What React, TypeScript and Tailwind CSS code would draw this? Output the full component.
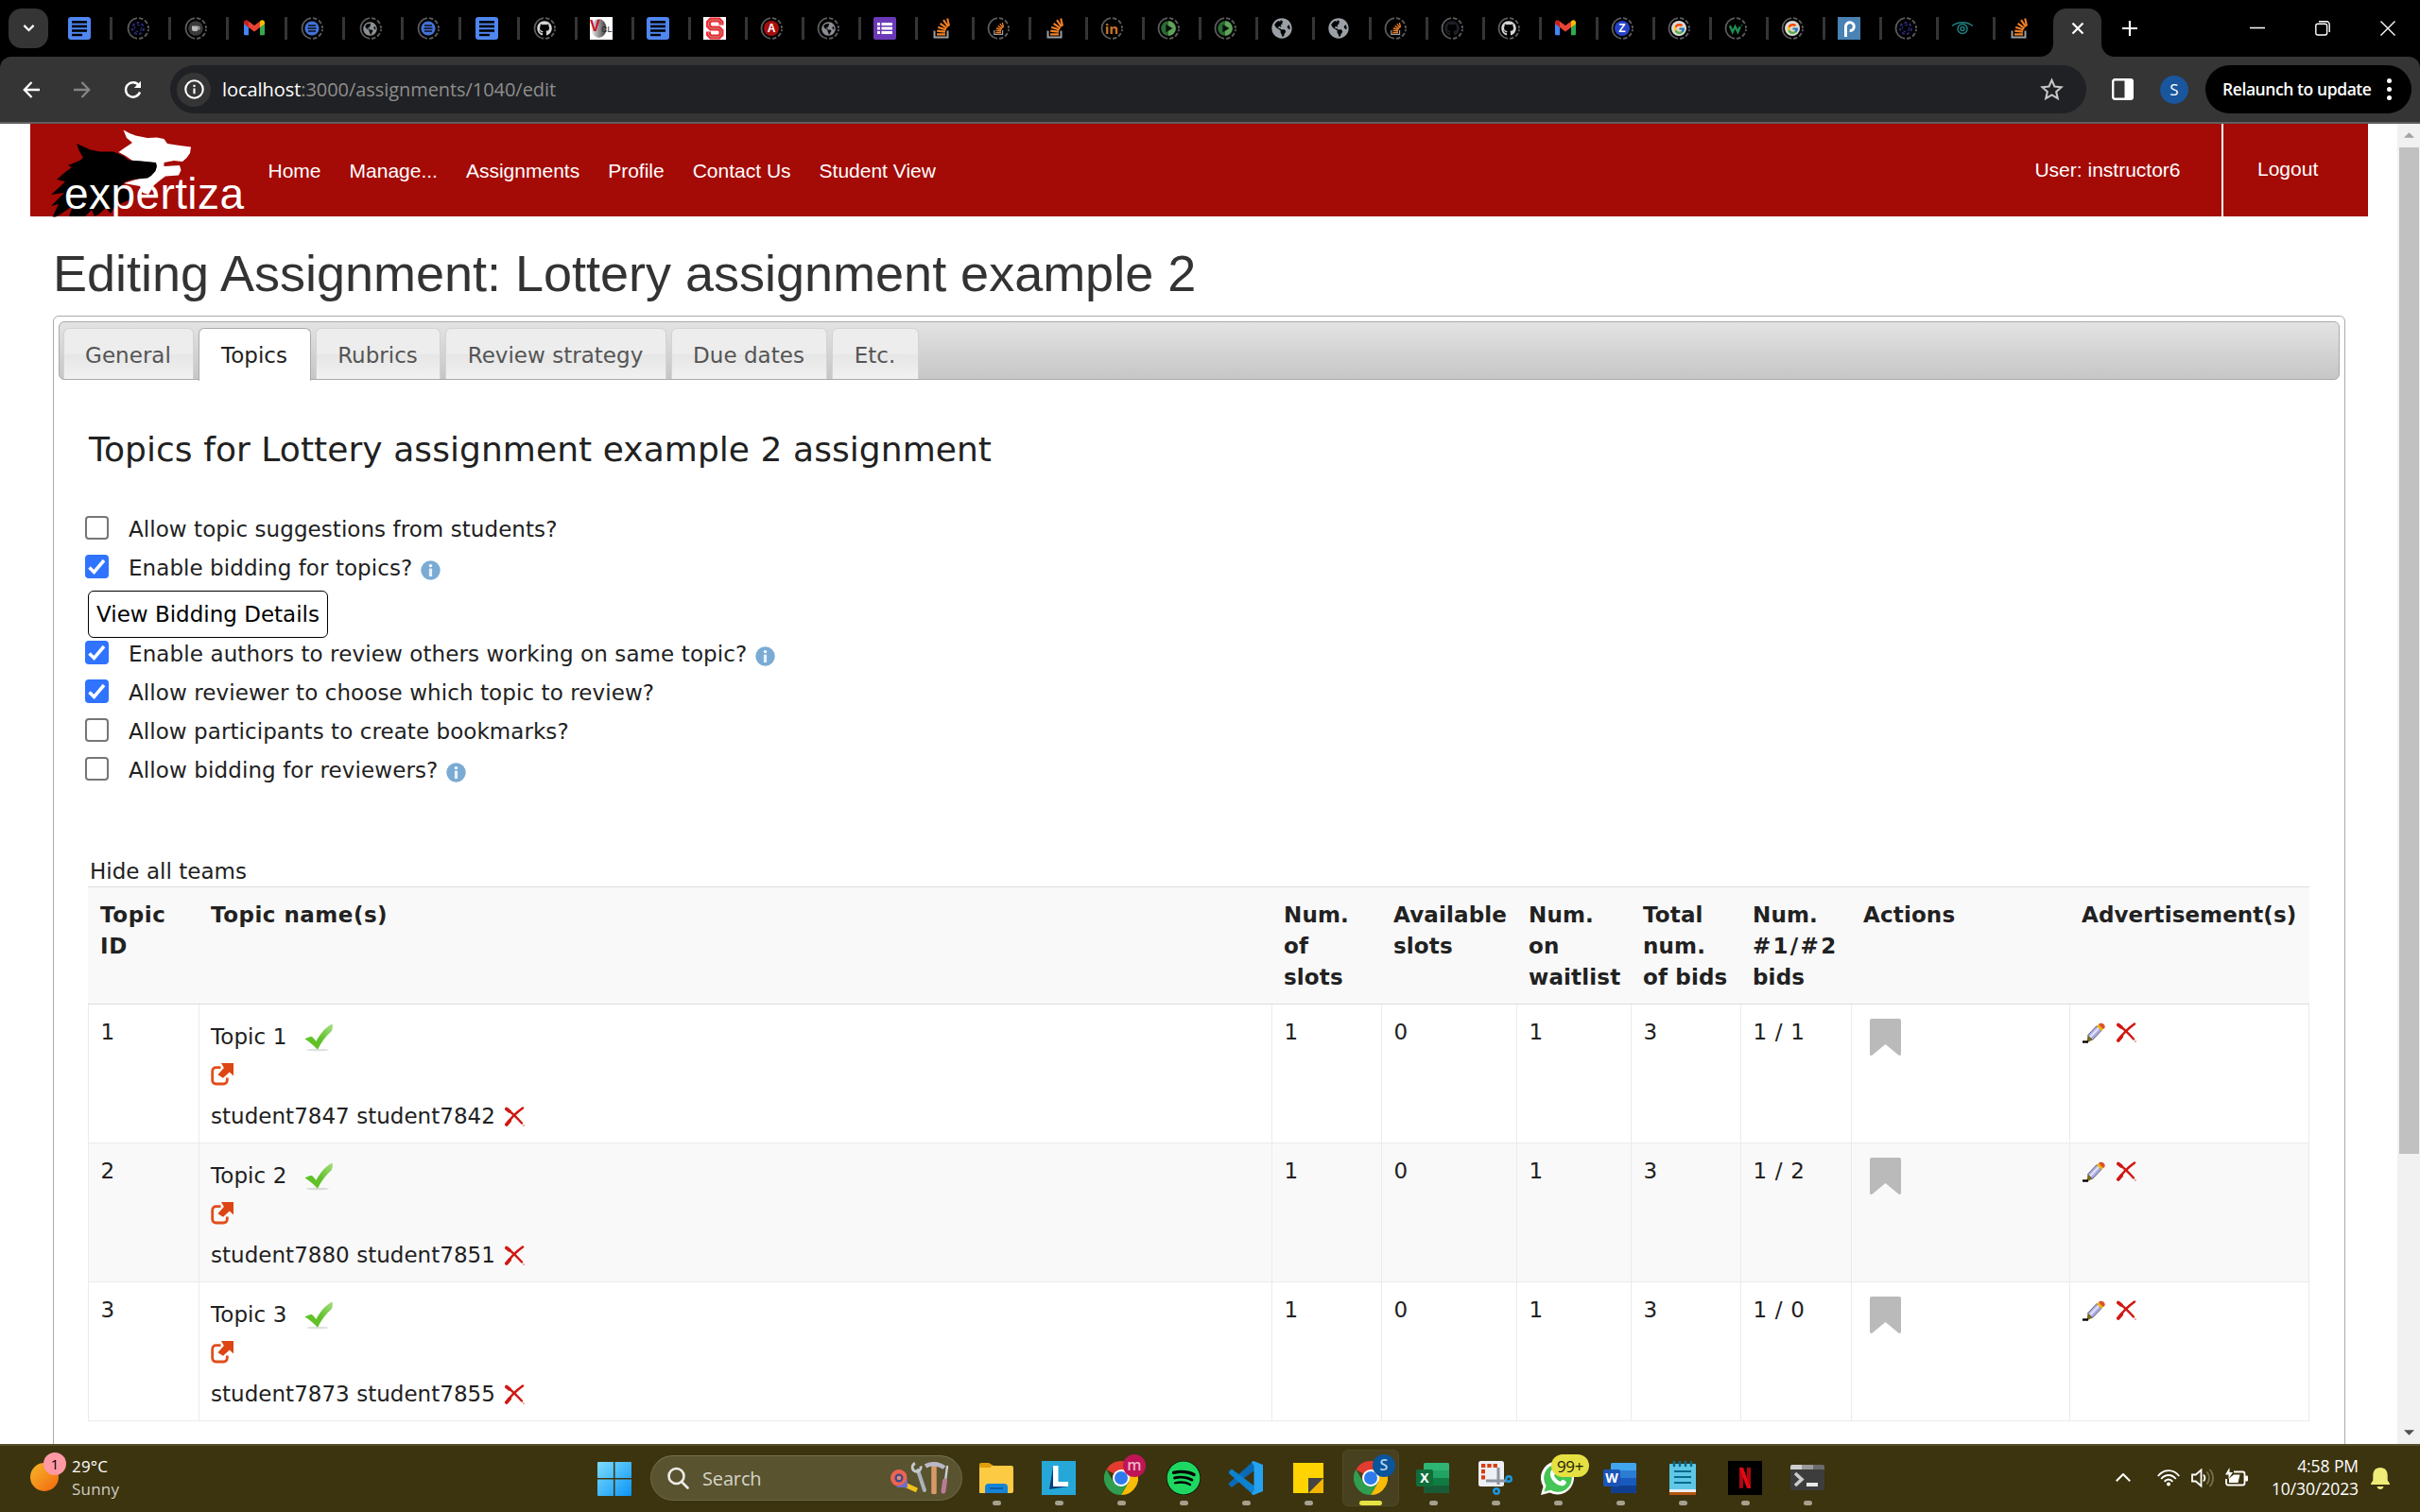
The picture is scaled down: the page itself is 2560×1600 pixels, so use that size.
import type { ReactNode } from "react";
import { FaGithub, FaGlobeAmericas, FaSpotify } from "react-icons/fa";
import { FcGoogle } from "react-icons/fc";

/* ---------- browser tab icons ---------- */

const Docs = () => (
  <svg viewBox="0 0 24 24" className="size-6">
    <rect width="24" height="24" rx="3" fill="#4f86f0" />
    <g fill="#000">
      <rect x="4" y="4" width="16" height="2.6" />
      <rect x="4" y="8.6" width="16" height="2.6" />
      <rect x="4" y="13.2" width="16" height="2.6" />
      <rect x="4" y="17.8" width="11" height="2.4" />
    </g>
  </svg>
);

const Forms = () => (
  <svg viewBox="0 0 24 24" className="size-6">
    <rect width="24" height="24" rx="2" fill="#6b39b8" />
    <g fill="#fff">
      <rect x="4" y="6" width="3" height="3" />
      <rect x="8.5" y="6" width="11.5" height="3" />
      <rect x="4" y="10.5" width="3" height="3" />
      <rect x="8.5" y="10.5" width="11.5" height="3" />
      <rect x="4" y="15" width="3" height="3" />
      <rect x="8.5" y="15" width="11.5" height="3" />
    </g>
  </svg>
);

const Gmail = () => (
  <svg viewBox="0 0 24 24" className="size-6">
    <path d="M1 6V18a1.2 1.2 0 0 0 1.2 1.2H6V10.500z" fill="#4285f4" />
    <path d="M23 6V18a1.2 1.2 0 0 1-1.2 1.2H18V10.500z" fill="#34a853" />
    <path d="M6 11 1 7.2V5.8C1 3.7 3.4 2.6 5 3.8l1 .8z" fill="#c5221f" />
    <path d="M18 11l5-3.8V5.8c0-2.1-2.4-3.2-4-2l-1 .8z" fill="#fbbc04" />
    <path d="M6 4.6 12 9l6-4.4V11l-6 4.5L6 11z" fill="#ea4335" />
  </svg>
);

const Stack = ({ small }: { small?: boolean }) => (
  <svg viewBox="0 0 24 24" className={small ? "size-[15px]" : "size-6"}>
    <path d="M4.5 14.5v7h14v-7" fill="none" stroke="#9a9fa3" strokeWidth="2" />
    <g stroke="#f48024" strokeWidth="2.1">
      <path d="M7 18.4h9M7.2 14.6l8.8 1M8.2 10.8l8.4 2.6M10.6 6.8l7 5M14 3.2l5 7.2M18.2 1.6l1.8 8" />
    </g>
  </svg>
);

const Sleeping = ({ children }: { children: ReactNode }) => (
  <span className="grid size-6 place-items-center">
    <svg viewBox="0 0 24 24" className="col-start-1 row-start-1 size-6" fill="none" stroke="#5c5c5c" strokeWidth="1.8">
      <path d="M11 1.1A11 11 0 0 0 11 22.9" />
      <path d="M13 1.1A11 11 0 0 1 23 12" strokeDasharray="4.5 2" />
      <path d="M13 22.9A11 11 0 0 0 23 13" strokeDasharray="4.5 2" />
    </svg>
    <span className="col-start-1 row-start-1 flex">{children}</span>
  </span>
);

const Burst = () => (
  <svg viewBox="0 0 16 16" className="size-4" fill="none" stroke="#2a2a78" strokeWidth="2" strokeDasharray="3 2.2">
    <circle cx="8" cy="8" r="6" />
    <circle cx="8" cy="8" r="3.6" strokeWidth="1.2" />
  </svg>
);

const Database = () => (
  <svg viewBox="0 0 16 16" className="size-4">
    <circle cx="8" cy="8" r="7.6" fill="#4472d6" />
    <path d="M4 5h8M3.500 8h9M4 11h8" stroke="#0b0f1c" strokeWidth="1.500" />
  </svg>
);

const Cup = () => (
  <svg viewBox="0 0 16 16" className="size-4">
    <circle cx="8" cy="8" r="7.8" fill="#3a3a3a" />
    <path d="M4 5.500h6.500V9a2 2 0 0 1-2 2H6a2 2 0 0 1-2-2z" fill="#b9b9b9" />
    <path d="M10.500 6.500H12V9h-1.500" fill="none" stroke="#b9b9b9" />
  </svg>
);

const Play = () => (
  <svg viewBox="0 0 16 16" className="size-4">
    <circle cx="8" cy="8" r="7.8" fill="#2c6b33" />
    <path d="M8 .2a7.8 7.8 0 0 1 0 15.6z" fill="#5fa35a" />
    <path d="M5.4 3.8 12.500 8l-7.100 4.200z" fill="#071108" />
  </svg>
);

const Round = ({ bg, children }: { bg: string; children: ReactNode }) => (
  <span className={`flex size-4 items-center justify-center rounded-full font-['Liberation_Sans'] text-[12px] font-bold leading-none text-white ${bg}`}>
    {children}
  </span>
);

const Globe = ({ small }: { small?: boolean }) => (
  <FaGlobeAmericas className={small ? "size-[15px] text-[#8b8f94]" : "size-[22px] text-[#9aa0a6]"} />
);

const tabIcons: ReactNode[] = [
  <Docs />,
  <Sleeping><Burst /></Sleeping>,
  <Sleeping><Cup /></Sleeping>,
  <Gmail />,
  <Sleeping><Database /></Sleeping>,
  <Sleeping><Globe small /></Sleeping>,
  <Sleeping><Database /></Sleeping>,
  <Docs />,
  <Sleeping><FaGithub className="size-4 text-[#d4d4d4]" /></Sleeping>,
  <svg viewBox="0 0 24 24" className="size-6">
    <defs><linearGradient id="ball" x1="0" x2="1" y1="0" y2="0"><stop offset="0" stopColor="#eee" /><stop offset="1" stopColor="#3a3a3a" /></linearGradient></defs>
    <rect width="24" height="24" fill="#fff" />
    <ellipse cx="9.500" cy="12" rx="8" ry="10" fill="url(#ball)" />
    <text x="0" y="15" fill="#c8102e" fontFamily="Liberation Sans" fontSize="16" fontWeight="700">V</text>
    <text x="12" y="16" fill="#222" fontFamily="Liberation Sans" fontSize="9">CL</text>
  </svg>,
  <Docs />,
  <svg viewBox="0 0 24 24" className="size-6">
    <rect width="24" height="24" fill="#fff" />
    <path d="M19 8.500V5.500L16.500 3H8L5.500 5.500v4L8 12h8.500l2.500 2.500v4L16.500 21H8l-2.500-2.500v-3" fill="none" stroke="#ef2b35" strokeWidth="5" />
    <path d="M19 8.500V5.500L16.500 3H8L5.500 5.500v4L8 12h8.500l2.500 2.500v4L16.500 21H8l-2.500-2.500v-3" fill="none" stroke="#b98f86" strokeWidth="1" />
  </svg>,
  <Sleeping><Round bg="bg-[#a80f0c]">A</Round></Sleeping>,
  <Sleeping><Globe small /></Sleeping>,
  <Forms />,
  <Stack />,
  <Sleeping><Stack small /></Sleeping>,
  <Stack />,
  <Sleeping><span className="font-['Open_Sans'] text-[15px] font-bold leading-none text-[#c8732a]">in</span></Sleeping>,
  <Sleeping><Play /></Sleeping>,
  <Sleeping><Play /></Sleeping>,
  <Globe />,
  <Globe />,
  <Sleeping><Stack small /></Sleeping>,
  <Sleeping><FaGithub className="size-4 text-[#1c2026]" /></Sleeping>,
  <Sleeping><FaGithub className="size-4 text-[#d4d4d4]" /></Sleeping>,
  <Gmail />,
  <Sleeping><Round bg="bg-[#2743c8]">Z</Round></Sleeping>,
  <Sleeping><span className="rounded-full bg-[#d9d9d9] p-[1.5px]"><FcGoogle className="size-[13px]" /></span></Sleeping>,
  <Sleeping>
    <svg viewBox="0 0 16 16" className="size-[15px]" fill="none" stroke="#1f8a54" strokeWidth="2.6"><path d="M1 4.500l3 7L7 5.500l3 6 2.500-6" /><circle cx="14.500" cy="4" r=".5" strokeWidth="1" /></svg>
  </Sleeping>,
  <Sleeping><span className="rounded-full bg-[#d9d9d9] p-[1.5px]"><FcGoogle className="size-[13px]" /></span></Sleeping>,
  <svg viewBox="0 0 24 24" className="size-6">
    <rect width="24" height="24" fill="#4a82b4" />
    <path d="M8.500 21V9.500a4.400 4.400 0 1 1 4.200 5" fill="none" stroke="#fff" strokeWidth="3" />
  </svg>,
  <Sleeping><Burst /></Sleeping>,
  <svg viewBox="0 0 24 24" className="size-6" fill="none" stroke="#1f8080" strokeWidth="1.5">
    <path d="M1 9.500c6-5 16-5 22 0" /><circle cx="12" cy="12.500" r="5" /><circle cx="12" cy="12.500" r="2" />
  </svg>,
  <Stack />,
];

function TabStrip() {
  return (
    <div className="flex h-[60px] bg-black">
      <div className="ml-[9px] mt-[9px] flex size-[42px] items-center justify-center rounded-[14px] bg-[#353535]">
        <svg viewBox="0 0 14 10" className="w-[13px]" fill="none" stroke="#fff" strokeWidth="2.4"><path d="M1.500 2 7 7.500 12.500 2" /></svg>
      </div>
      <div className="ml-[21px] flex w-[2086px] items-center">
        {tabIcons.map((icon, i) => (
          <div key={i} className={`flex shrink-0 items-center ${i < 8 ? "w-[61.5px]" : "w-[60px]"}`}>
            <span className="flex w-6 justify-center">{icon}</span>
            {i < tabIcons.length - 1 && <span className="ml-5 h-6 w-[3px] bg-[#353535]" />}
          </div>
        ))}
      </div>
      <div className="flex items-end">
        <svg viewBox="0 0 14 14" className="size-[14px]"><path d="M14 0v14H0A14 14 0 0 0 14 0z" fill="#353535" /></svg>
        <div className="flex h-[51px] w-[51px] items-center justify-center rounded-t-[14px] bg-[#353535] pb-[9px]">
          <svg viewBox="0 0 14 14" className="size-[14px]" stroke="#fff" strokeWidth="2.200"><path d="M1.500 1.500l11 11M12.500 1.500l-11 11" /></svg>
        </div>
        <svg viewBox="0 0 14 14" className="size-[14px]"><path d="M0 0v14h14A14 14 0 0 1 0 0z" fill="#353535" /></svg>
      </div>
      <div className="ml-[8px] flex items-center">
        <svg viewBox="0 0 16 16" className="size-4" stroke="#fff" strokeWidth="2.200"><path d="M8 0v16M0 8h16" /></svg>
      </div>
      <div className="ml-auto mr-[26px] flex items-center gap-[53px]">
        <svg viewBox="0 0 16 16" className="size-4" stroke="#fff" strokeWidth="1.500"><path d="M0 7.500h16" /></svg>
        <svg viewBox="0 0 16 16" className="size-4" fill="none" stroke="#fff" strokeWidth="1.400">
          <rect x=".8" y="3.200" width="11.800" height="11.800" rx="2" /><path d="M4 .8h8.200a3 3 0 0 1 3 3V12" />
        </svg>
        <svg viewBox="0 0 16 16" className="size-4" stroke="#fff" strokeWidth="1.400"><path d="M.5.5l15 15M15.500.5l-15 15" /></svg>
      </div>
    </div>
  );
}

function Toolbar() {
  return (
    <div className="bg-black">
      <div className="flex h-[69px] items-center rounded-t-[12px] bg-[#353535]">
        <svg viewBox="0 0 18 18" className="ml-[24px] size-[18px]" fill="none" stroke="#fff" strokeWidth="2.300"><path d="M9.500 1 1.800 9l7.700 8M2 9h16" /></svg>
        <svg viewBox="0 0 18 18" className="ml-[36px] size-[18px]" fill="none" stroke="#858585" strokeWidth="2.300"><path d="M8.500 1l7.700 8-7.700 8M16 9H0" /></svg>
        <svg viewBox="0 0 20 20" className="ml-[35px] size-5" fill="none" stroke="#fff" strokeWidth="2.400"><path d="M17 12.500A7.700 7.700 0 1 1 16 5.500" /><path d="M18 .8V8h-7.200z" fill="#fff" stroke="none" /></svg>
        <div className="ml-[29px] flex h-[51px] w-[2027px] items-center rounded-full bg-[#202124]">
          <span className="ml-[7px] flex size-9 items-center justify-center rounded-full bg-[#353535]">
            <svg viewBox="0 0 20 20" className="size-[21px]" fill="none" stroke="#fff" strokeWidth="2"><circle cx="10" cy="10" r="8.800" /><path d="M10 9v5.600M10 5.400v2.100" /></svg>
          </span>
          <span className="ml-[12px] whitespace-nowrap font-['Open_Sans'] text-[20px] leading-none tracking-[-0.06px] text-[#8e8e8e]">
            <span className="text-white">localhost</span>:3000/assignments/1040/edit
          </span>
          <svg viewBox="0 0 24 24" className="ml-auto mr-[24px] size-[25px]" fill="none" stroke="#c7c7c7" strokeWidth="2">
            <path d="M12 2.800l2.800 6.300 6.900.7-5.200 4.600 1.500 6.800-6-3.500-6 3.500 1.500-6.800L2.300 9.800l6.900-.7z" />
          </svg>
        </div>
        <svg viewBox="0 0 23 23" className="ml-[27px] size-[23px]"><rect x="1.200" y="1.200" width="20.600" height="20.600" rx="2" fill="none" stroke="#fff" strokeWidth="2.400" /><path d="M13.500 1h8v21h-8z" fill="#fff" /></svg>
        <span className="ml-[28px] flex size-[30px] items-center justify-center rounded-full bg-[#1a569d] font-['Open_Sans'] text-[17px] leading-none text-white">S</span>
        <div className="ml-[18px] flex h-[51px] w-[218px] items-center rounded-full bg-black pl-[18px]">
          <span className="whitespace-nowrap font-['Open_Sans'] text-[17.5px] font-semibold leading-none tracking-[-0.42px] text-white">Relaunch to update</span>
          <span className="ml-[16px] flex flex-col gap-[4px]">
            <i className="size-[5px] rounded-full bg-white" /><i className="size-[5px] rounded-full bg-white" /><i className="size-[5px] rounded-full bg-white" />
          </span>
        </div>
      </div>
    </div>
  );
}

/* ---------- page ---------- */

const Logo = () => (
  <svg viewBox="54 131 206 98" className="ml-[22px] h-[98px] w-[206px] shrink-0 overflow-visible">
    <path
      d="M130.500 137.500 L137 141 L143.500 143.500 L156 146 L166 145.500 L173.500 147 L177 152 L190 154 L202 155.500 L201 162 L197.500 167 L193 171 L184 170 L173.500 172 L173.500 176 L190 175 L191.500 180 L189 185.500 L175 186.500 L169 191 L163 196 L157 206 L151 204 L148 197 L131 194 L150 188 L162 180 L162 172 L140 170 L133 165 L125.500 161 L131 157 L140 151 L134 146 Z"
      fill="#fff"
    />
    <path
      d="M81 152 L88 155 L95.500 158.500 L106 160.500 L120 160.500 L130.500 165 L136 169.500 L150 170.500 L165 172 L166 176 L164.500 181 L160 186 L156 188.500 L140 190 L133 192 L128 197 L140 205 L136 212 L122 218 L117 226 L112 220 L104 227 L100 229 L97 222 L90 229 L73 229 L77 218 L68 224 L54 233 L62 216 L54 218 L68 204 L54 206 L63 198 L69 192 L60 190 L68 183 L76 177 L72 175 L84 170 L88 167 L84 160 Z"
      fill="#000"
    />
    <path d="M54 229.500h70v8H54z" fill="#fff" />
    <text x="68" y="220.700" fill="#fff" fontFamily="Liberation Sans" fontSize="46" textLength="190" lengthAdjust="spacing">expertiza</text>
  </svg>
);

const navItems = ["Home", "Manage...", "Assignments", "Profile", "Contact Us", "Student View"];

function Header() {
  return (
    <header className="ml-8 flex h-[98px] w-[2473px] shrink-0 bg-[#a40a06] font-['Liberation_Sans'] text-[21px] leading-[30px] text-white">
      <Logo />
      <nav className="ml-[23.500px] flex gap-[30px] pt-[35px]">
        {navItems.map((n) => <span key={n} className="whitespace-nowrap">{n}</span>)}
      </nav>
      <span className="ml-auto mr-[43.500px] pt-[34px]">User: instructor6</span>
      <span className="w-[155px] border-l-2 border-white pl-[36px] pt-[33px]">Logout</span>
    </header>
  );
}

const tabs = [
  { label: "General", cls: "w-[138px]" },
  { label: "Topics", cls: "w-[119px]" },
  { label: "Rubrics", cls: "w-[132px]" },
  { label: "Review strategy", cls: "w-[234px]" },
  { label: "Due dates", cls: "w-[165px]" },
  { label: "Etc.", cls: "w-[92px]" },
];

function TabBar() {
  return (
    <div className="ml-[5px] mt-[5px] flex h-[62px] w-[2413px] gap-[5px] rounded-[6px] border border-[#aaa] bg-gradient-to-b from-[#e3e3e3] to-[#c6c6c6] pl-[3.500px] pt-[6px] text-[#555]">
      {tabs.map((t) => (
        <div
          key={t.label}
          className={`flex items-center justify-center rounded-t-[6px] border border-b-0 leading-none tracking-[0.02px] ${t.cls} ${
            t.label === "Topics" ? "h-[56px] border-[#aaa] bg-white pt-[1px] text-[#212121]" : "h-[54px] border-[#d3d3d3] bg-gradient-to-b from-[#ededed] from-50% via-[#e6e6e6] via-50% to-[#f1f1f1] pt-[3px]"
          }`}
        >
          {t.label}
        </div>
      ))}
    </div>
  );
}

const InfoIcon = () => (
  <svg viewBox="0 0 21 21" className="ml-[9px] mt-[3px] size-[21px]">
    <circle cx="10.500" cy="10.500" r="10.200" fill="#7aabd4" />
    <circle cx="10.500" cy="5.600" r="1.700" fill="#fff" />
    <rect x="8.900" y="8.600" width="3.200" height="8.400" fill="#e9f2f9" />
  </svg>
);

function Option({ label, checked, info, cls = "tracking-[0.065px]" }: { label: string; checked?: boolean; info?: boolean; cls?: string }) {
  return (
    <label className="flex h-[41px] items-center">
      {checked ? (
        <svg viewBox="0 0 25 25" className="mb-[4px] size-[25px]">
          <rect width="25" height="25" rx="4" fill="#2f73ff" />
          <path d="M4.500 13.500l5 5L20 6" fill="none" stroke="#fff" strokeWidth="3.500" />
        </svg>
      ) : (
        <span className="mb-[4px] size-[25px] rounded-[4px] border-2 border-[#767676] bg-white" />
      )}
      <span className={`ml-[21px] whitespace-nowrap ${cls}`}>{label}</span>
      {info && <InfoIcon />}
    </label>
  );
}

const RedX = () => (
  <svg viewBox="0 0 21 21" className="size-[21px]" fill="none" stroke="#d01812" strokeLinecap="round">
    <path d="M2 2.500C7 6 13 12 18 17.500" strokeWidth="2.400" />
    <path d="M1.800 19C6 12.500 12 6.500 19 1.500" strokeWidth="2.600" />
    <path d="M1.800 2.500 5 5M1.800 19l3.500-4" strokeWidth="3.600" />
    <circle cx="20" cy="20" r=".4" stroke="#f08c8c" strokeWidth="1.200" />
  </svg>
);

const Check = () => (
  <svg viewBox="0 0 32 32" className="size-8">
    <defs>
      <linearGradient id="green" x1="1" y1="0" x2="0" y2="1">
        <stop offset="0" stopColor="#a9dd85" /><stop offset=".5" stopColor="#63c22c" /><stop offset="1" stopColor="#5dc11f" />
      </linearGradient>
    </defs>
    <ellipse cx="15" cy="29" rx="12" ry="1.300" fill="#000" opacity=".12" />
    <path d="M1.500 17.500C5 15.500 8 14.500 9.500 15.500c2 1.500 3 3.500 4 4.500C17 13 23 5 30.500 1.500c.8 3.500.2 6-1 8-6 5-10.500 11-14.500 19.200C11 24 6 20.500 1.500 17.500z" fill="url(#green)" />
  </svg>
);

const Export = () => (
  <svg viewBox="0 0 24 24" className="size-6">
    <path d="M10.500 4.700H5.400A3.700 3.700 0 0 0 1.700 8.400v9.900A3.700 3.700 0 0 0 5.400 22h8.200a3.700 3.700 0 0 0 3.700-3.700v-2.800" fill="none" stroke="#e04e1b" strokeWidth="2.800" />
    <path d="M11 0h13v13.500l-4.200-4-6.800 6.300-5.600-3.600 6.500-7.200z" fill="#dd4512" />
  </svg>
);

const Bookmark = () => (
  <svg viewBox="0 0 33 39" className="h-[39px] w-[33px]"><path d="M2 0h29a2 2 0 0 1 2 2v35.500c0 1.500-2 1.800-3 .8L16.500 27 3 38.300c-1 1-3 .7-3-.8V2a2 2 0 0 1 2-2z" fill="#bababa" /></svg>
);

const Pencil = () => (
  <svg viewBox="0 0 24 22" className="h-[22px] w-6">
    <path d="M5.500 13.500 15 3.500l5 5L10.500 18.500z" fill="#a9a9e0" stroke="#66667c" strokeWidth="1" />
    <path d="M8 15.500 17.500 5.500" stroke="#e0e0fb" strokeWidth="2.400" />
    <path d="M15 4 18 1.200l5 4.800L20 8.800z" fill="#efb310" />
    <path d="M17 2C19-.8 24.500 1 23.600 5.500l-1.800 1.500z" fill="#d9542b" />
    <path d="M5.500 13.500 10.500 18.500 4.500 21.500z" fill="#7d6a1a" />
    <path d="M0 20.500h6" stroke="#000" strokeWidth="2.400" />
  </svg>
);

const cols = "grid grid-cols-[117px_1135px_116px_143px_121px_116px_117px_231px_254px]";

const topics = [
  { id: 1, students: "student7847 student7842", bids: "1 / 1" },
  { id: 2, students: "student7880 student7851", bids: "1 / 2" },
  { id: 3, students: "student7873 student7855", bids: "1 / 0" },
];

function TopicsTable() {
  const num = "border-l border-[#ebebeb] pl-[12.500px] pt-[13px]";
  return (
    <div className="ml-[36px] mt-px w-[2350px] leading-[33px] text-[#212121]">
      <div className={`${cols} h-[124px] border-t border-[#ddd] bg-[#f9f9f9] pt-[12.500px] font-bold tracking-[0.150px] [&>div]:pl-[13px]`}>
        <div className="tracking-[0.600px]">Topic<br />ID</div>
        <div className="tracking-[0.500px]">Topic name(s)</div>
        <div>Num.<br />of<br />slots</div>
        <div className="tracking-0">Available<br />slots</div>
        <div>Num.<br />on<br />waitlist</div>
        <div className="tracking-0">Total<br />num.<br />of bids</div>
        <div>Num.<br /><span className="tracking-[2.300px]">#1/#2</span><br />bids</div>
        <div>Actions</div>
        <div className="tracking-[0.080px]">Advertisement(s)</div>
      </div>
      {topics.map((t) => (
        <div key={t.id} className={`${cols} h-[147px] border-t ${t.id === 1 ? "border-[#ddd]" : "border-[#ebebeb]"} ${t.id === 2 ? "bg-[#f9f9f9]" : "bg-white"}`}>
          <div className={num}>{t.id}</div>
          <div className="flex flex-col border-l border-[#ebebeb] pl-[12px] pt-[17px]">
            <div className="flex h-[35px] items-center tracking-[0.100px]">Topic {t.id}<span className="ml-[17px]"><Check /></span></div>
            <div className="mt-[10px]"><Export /></div>
            <div className="mt-[16px] flex items-center gap-[10px] tracking-[0.030px]">{t.students}<RedX /></div>
          </div>
          <div className={num}>1</div>
          <div className={num}>0</div>
          <div className={num}>1</div>
          <div className={num}>3</div>
          <div className={`${num} tracking-[0.700px]`}>{t.bids}</div>
          <div className="border-l border-[#ebebeb] pl-[19px] pt-[15px]"><Bookmark /></div>
          <div className="flex gap-[12px] border-x border-[#ebebeb] pl-[13px] pt-[19px]"><Pencil /><RedX /></div>
        </div>
      ))}
      <div className="border-t border-[#ebebeb]" />
    </div>
  );
}

function Page() {
  return (
    <div className="flex h-[1399px] overflow-hidden border-t-2 border-[#5f5f5f] bg-white">
      <main className="flex w-[2536px] flex-col">
        <Header />
        <h1 className="ml-14 mt-[30px] whitespace-nowrap font-['Liberation_Sans'] text-[54px] leading-[60px] tracking-[-0.010px] text-[#333]">
          Editing Assignment: Lottery assignment example 2
        </h1>
        <section className="ml-14 mt-[15px] h-[1300px] w-[2425px] shrink-0 rounded-t-[6px] border border-[#aaa] font-['DejaVu_Sans'] text-[23px] text-[#212121]">
          <TabBar />
          <h2 className="ml-[37px] mt-[54px] whitespace-nowrap text-[36px] leading-[40px] tracking-[0.060px]">
            Topics for Lottery assignment example 2 assignment
          </h2>
          <div className="ml-[33px] mt-[44px] flex flex-col">
            <Option label="Allow topic suggestions from students?" />
            <Option label="Enable bidding for topics?" checked info />
            <button className="-mb-[3px] ml-[3px] mt-[3px] h-[50px] w-[254px] whitespace-nowrap rounded-[6px] border border-black bg-white leading-none text-black">View Bidding Details</button>
            <Option label="Enable authors to review others working on same topic?" checked info cls="tracking-[0.110px]" />
            <Option label="Allow reviewer to choose which topic to review?" checked cls="tracking-[0.090px]" />
            <Option label="Allow participants to create bookmarks?" />
            <Option label="Allow bidding for reviewers?" info cls="tracking-[0.100px]" />
          </div>
          <div className="ml-[38px] mt-[71px] leading-[30px] tracking-[0.030px]">Hide all teams</div>
          <TopicsTable />
        </section>
      </main>
      <div className="flex w-6 flex-col items-center bg-[#f1f1f1]">
        <svg viewBox="0 0 12 6" className="mt-[9px] h-[6px] w-[11px]"><path d="M6 0l6 6H0z" fill="#a3a3a3" /></svg>
        <span className="mt-[10px] h-[1065px] w-[21px] bg-[#c1c1c1]" />
        <svg viewBox="0 0 12 6" className="mb-[9px] mt-auto h-[6px] w-[11px]"><path d="M6 6l6-6H0z" fill="#505050" /></svg>
      </div>
    </div>
  );
}

/* ---------- taskbar ---------- */

const Chrome = ({ badge, cls }: { badge: string; cls: string }) => (
  <span className="relative size-9">
    <svg viewBox="0 0 36 36" className="size-9">
      <path d="M18 18 2.400 9A18 18 0 0 1 33.600 9z" fill="#e33b2e" />
      <path d="M18 9h15.600A18 18 0 0 1 18 36l7.800-13.500z" fill="#fbbc05" />
      <path d="M25.800 22.500 18 36A18 18 0 0 1 2.400 9l7.800 13.500L18 27z" fill="#2f9e4f" />
      <circle cx="18" cy="18" r="9" fill="#fff" />
      <circle cx="18" cy="18" r="7" fill="#2f7bed" />
    </svg>
    <span className={`absolute -right-[8px] -top-[7px] flex size-6 items-center justify-center rounded-full pb-[2px] font-['Open_Sans'] text-[16px] font-semibold leading-none ${cls}`}>{badge}</span>
  </span>
);

const Folder = () => (
  <svg viewBox="0 0 36 36" className="size-9">
    <path d="M0 4a2 2 0 0 1 2-2h8l5 3v6H0z" fill="#e09e0c" />
    <path d="M0 7h11l3-2h20a2 2 0 0 1 2 2v25a2 2 0 0 1-2 2H0z" fill="#fdca44" />
    <path d="M6 34V28a4 4 0 0 1 4-4h16a4 4 0 0 1 4 4v6z" fill="#1583d8" />
    <path d="M11 29h14" stroke="#0b5ea8" strokeWidth="2" />
  </svg>
);
const LinkL = () => (
  <svg viewBox="0 0 36 36" className="size-9">
    <rect width="36" height="36" fill="#25a8d8" />
    <path d="M12 6 8 30l20-3H13z" fill="#0a3f7a" />
    <path d="M12 5h5.500v17H28v5H12z" fill="#fff" />
  </svg>
);
const Code = () => (
  <svg viewBox="0 0 36 36" className="size-9">
    <path d="M26 0 0 23.500v2l3 2.500L27 10z" fill="#0a6ab6" />
    <path d="M0 11l3-2.500 24 18L26 36 0 13z" fill="#0c82d0" />
    <path d="M26 0l10 4v28l-10 4-2-1 2.500-4V5L24 1z" fill="#25a3f2" />
  </svg>
);
const Sticky = () => (
  <svg viewBox="0 0 36 36" className="size-9">
    <path d="M2 2h32v16L18 34H2z" fill="#ffd400" /><path d="M18 34 34 18v16z" fill="#f2b500" /><path d="M18 34V18h16z" fill="#444" />
  </svg>
);
const Office = ({ l, c }: { l: string; c: string[] }) => (
  <svg viewBox="0 0 36 36" className="size-9">
    <rect x="8" y="2" width="27" height="32" rx="2" fill={c[1]} />
    <path d="M8 10V4a2 2 0 0 1 2-2h23a2 2 0 0 1 2 2v6z" fill={c[0]} />
    <path d="M8 18h27v8H8z" fill={c[2]} /><path d="M8 26h27v6a2 2 0 0 1-2 2H10a2 2 0 0 1-2-2z" fill={c[3]} />
    <rect y="9" width="18" height="18" rx="2" fill={c[4]} />
    <text x="9" y="23" textAnchor="middle" fill="#fff" fontFamily="Open Sans" fontWeight="700" fontSize="14">{l}</text>
  </svg>
);
const Snip = () => (
  <svg viewBox="0 0 36 36" className="size-9">
    <rect width="27" height="27" rx="2.500" fill="#eceff4" />
    <path d="M3 5h17M5 9v12" stroke="#dc3c0c" strokeWidth="4" strokeDasharray="4.300 2" />
    <path d="M21 7v18M8 21h22" stroke="#8c95a2" strokeWidth="3" />
    <g fill="none" stroke="#1a98e4" strokeWidth="2.400"><circle cx="32" cy="19" r="2.800" /><circle cx="19" cy="32" r="2.800" /></g>
  </svg>
);
const Notepad = () => (
  <svg viewBox="0 0 36 36" className="size-9">
    <rect x="4" y="3" width="28" height="28" rx="1" fill="#5fc8e6" /><rect x="4" y="30" width="28" height="3" fill="#eee" /><rect x="4" y="33" width="28" height="3" fill="#b5560f" />
    <path d="M9 11h18M9 17h18M9 23h18" stroke="#0a6a8c" strokeWidth="2" />
    <path d="M9 1v4M15 1v4M21 1v4M27 1v4" stroke="#0a6a8c" strokeWidth="2.600" strokeLinecap="round" />
  </svg>
);
const Netflix = () => (
  <svg viewBox="0 0 36 36" className="size-9">
    <rect width="36" height="36" fill="#000" />
    <path d="M12 7h4v21.500l-4 .5zM20 7h4v22l-4-.5z" fill="#b00610" /><path d="M12 7h4l8 22-4-.5z" fill="#e50914" />
  </svg>
);
const Terminal = () => (
  <svg viewBox="0 0 36 36" className="size-9">
    <rect y="4" width="36" height="27" rx="2" fill="#3d3d3d" />
    <path d="M0 9V6a2 2 0 0 1 2-2h10v5z" fill="#cfcfcf" /><path d="M12 4h12v5H12z" fill="#9a9a9a" /><path d="M24 4h10a2 2 0 0 1 2 2v3H24z" fill="#6b6b6b" />
    <path d="M5 13l7 6.500-7 6.500" fill="none" stroke="#ccc" strokeWidth="3.600" /><rect x="17" y="23" width="12" height="4" fill="#e8e8e8" />
  </svg>
);
const WhatsApp = () => (
  <span className="relative size-9">
    <svg viewBox="0 0 36 36" className="size-9">
      <path d="M0 36l2.500-9A17.500 17.500 0 1 1 9.500 33.500z" fill="#fff" />
      <path d="M3.500 32.500l2-6.500A14.800 14.800 0 1 1 10.500 30.800z" fill="#45c555" />
      <path d="M11 10c2-2 3-1 4 2 .8 2-1 2.600-1 3.400 1.500 3 3.500 5 6.500 6.400 1 0 1.600-2.400 3-1.900 3 1.200 4 2 3 4-2.500 4-8 2.500-12-1.200S8.500 14 11 10z" fill="#fff" />
    </svg>
    <span className="absolute -top-[7px] left-[11px] flex h-6 w-10 items-center justify-center rounded-full bg-[#e5e142] font-['Open_Sans'] text-[17px] leading-none tracking-[-0.400px] text-[#1c1a05]">99+</span>
  </span>
);

const apps: ReactNode[] = [
  <Folder />,
  <LinkL />,
  <Chrome badge="m" cls="bg-[#bf1556] text-[#f0b3c8]" />,
  <span className="flex size-9 items-center justify-center rounded-full bg-black"><FaSpotify className="size-9 text-[#1ed760]" /></span>,
  <Code />,
  <Sticky />,
  <Chrome badge="S" cls="bg-[#0a559c] text-[#b5d2ec]" />,
  <Office l="X" c={["#2fb573", "#21a366", "#107c41", "#185c37", "#0f6e3a"]} />,
  <Snip />,
  <WhatsApp />,
  <Office l="W" c={["#41a5ee", "#2b7cd3", "#185abd", "#103f91", "#1b55b8"]} />,
  <Notepad />,
  <Netflix />,
  <Terminal />,
];

const Tools = () => (
  <svg viewBox="0 0 64 34" className="h-[34px] w-16">
    <path d="M16 24l13 6" stroke="#f0c21c" strokeWidth="5" />
    <path d="M1 17a9 9 0 0 1 17-4l1 13h-9a9 9 0 0 1-9-9z" fill="#ee6450" /><path d="M8 27h11l-1-12a9 9 0 0 1-10 10z" fill="#6a6fd0" />
    <circle cx="10" cy="17" r="4.500" fill="#3e4a8c" /><circle cx="10" cy="17" r="2.300" fill="#e08a7c" />
    <path d="M30 9l7 21" stroke="#aab2b8" strokeWidth="4" strokeLinecap="round" /><path d="M27 1.500a4.500 4.500 0 1 0 6 3" fill="none" stroke="#c3cacf" strokeWidth="3" />
    <path d="M47 6v26" stroke="#d79a68" strokeWidth="5.500" strokeLinecap="round" /><path d="M38 4.500C43 1.500 51 1 58 6" fill="none" stroke="#b9b9c8" strokeWidth="4.500" />
    <path d="M61 5l-2 15" stroke="#c7ced6" strokeWidth="2.400" strokeLinecap="round" /><path d="M58.500 20l-1.500 11" stroke="#b97b96" strokeWidth="5" strokeLinecap="round" />
  </svg>
);

function Taskbar() {
  return (
    <footer className="flex h-[72px] border-t-2 border-[#55502f] bg-[#3c340f] font-['Open_Sans'] text-white">
      <div className="flex w-[632px] pl-[32px]">
        <span className="relative mt-[18px] size-[30px] rounded-full bg-gradient-to-br from-[#f3b62a] to-[#f2640c]">
          <span className="absolute -top-[11px] left-[14px] flex size-6 items-center justify-center rounded-full bg-[#ff99a4] text-[15px] leading-none text-black">1</span>
        </span>
        <div className="ml-[14px] mt-[10px] text-[17px] leading-6 tracking-[0.200px]">
          <div>29°C</div>
          <div className="text-[#cfcdc3]">Sunny</div>
        </div>
      </div>
      <svg viewBox="0 0 36 36" className="mt-[17px] size-9">
        <defs><linearGradient id="win" x1="0" y1="0" x2="1" y2="1"><stop offset="0" stopColor="#7ddcff" /><stop offset="1" stopColor="#0b95f5" /></linearGradient></defs>
        <path d="M1 0h16v17H0V1a1 1 0 0 1 1-1zM18.500 0H35a1 1 0 0 1 1 1v16H18.500zM0 18.500h17V36H1a1 1 0 0 1-1-1zM18.500 18.500H36V35a1 1 0 0 1-1 1H18.500z" fill="url(#win)" />
      </svg>
      <div className="ml-[20px] mt-[10px] flex h-12 w-[330px] items-center rounded-full border border-[#6b6647] border-t-[#77724f] bg-[#59532f]">
        <svg viewBox="0 0 24 24" className="ml-[16px] size-6" fill="none" stroke="#ecebe6" strokeWidth="2.600"><circle cx="10.500" cy="10" r="8" /><path d="M16 16l6.500 6.500" strokeLinecap="round" /></svg>
        <span className="ml-[14px] pt-px text-[20px] leading-none tracking-[-0.150px] text-[#d6d4c9]">Search</span>
        <span className="ml-auto mr-[12px]"><Tools /></span>
      </div>
      <div className="ml-[3px] flex">
        {apps.map((a, i) => (
          <div key={i} className="flex w-[66px] justify-center pt-[4px]">
            <div className={`flex h-[60px] w-[60px] flex-col items-center pt-[11px] ${i === 6 ? "rounded-[6px] border border-[#504925] bg-[#484120]" : "border border-transparent"}`}>
              {a}
              <span className={`mt-[6px] h-[5px] shrink-0 rounded-full ${i === 6 ? "w-6 bg-[#e5e142]" : "w-[9px] bg-[#a5a18e]"}`} />
            </div>
          </div>
        ))}
      </div>
      <div className="ml-auto mr-[32px] flex">
        <svg viewBox="0 0 16 9" className="mt-[29px] h-[9px] w-4" fill="none" stroke="#fff" strokeWidth="2"><path d="M.8 8.200 8 1l7.200 7.200" /></svg>
        <svg viewBox="0 0 24 18" className="ml-[28px] mt-[25px] h-[18px] w-6" fill="none" stroke="#fff" strokeWidth="1.900">
          <path d="M.8 7C7-.8 17-.8 23.200 7M4.200 10c4.400-5.400 11.200-5.400 15.600 0M7.600 12.800c2.500-3 6.300-3 8.800 0" /><circle cx="12" cy="15.400" r="2" fill="#fff" stroke="none" />
        </svg>
        <svg viewBox="0 0 24 20" className="ml-[12px] mt-[24px] h-5 w-6" fill="none" strokeWidth="1.800">
          <path d="M1 6.500h3.800L10.500 1.500v17l-5.700-5H1zM13 6.500c1.600 2 1.600 5 0 7" stroke="#fff" /><path d="M16.500 3.500c3.300 3.500 3.300 9.500 0 13M19.500 1c4.700 5 4.700 13 0 18" stroke="#77724f" />
        </svg>
        <svg viewBox="0 0 24 20" className="ml-[12px] mt-[23px] h-5 w-6">
          <path d="M9 4.500h9.500a2 2 0 0 1 2 2v10a2 2 0 0 1-2 2H3a2 2 0 0 1-2-2V12" fill="none" stroke="#fff" strokeWidth="1.800" /><rect x="21" y="8.500" width="3" height="6" rx="1" fill="#fff" />
          <path d="M9 7.500h6.500L13.500 16H4v-4.500z" fill="#fff" /><path d="M4.500 0v5H8l-4.500 7V7.500H0z" fill="#fff" />
        </svg>
        <div className="ml-[24px] mt-[9px] w-[93px] text-right text-[17.500px] leading-6 tracking-[-0.080px]">
          <div>4:58 PM</div>
          <div>10/30/2023</div>
        </div>
        <svg viewBox="0 0 20 23" className="ml-[13px] mt-[23px] h-[23px] w-5" fill="#efec78">
          <path d="M10 0c5 0 7.700 3.600 7.700 8v5.500L20 17v1H0v-1l2.300-3.500V8C2.300 3.600 5 0 10 0zM6.500 20h7c-.5 4-6.500 4-7 0z" />
        </svg>
      </div>
    </footer>
  );
}

export default function App() {
  return (
    <div className="flex h-[1600px] w-[2560px] flex-col overflow-hidden bg-black">
      <TabStrip />
      <Toolbar />
      <Page />
      <Taskbar />
    </div>
  );
}
